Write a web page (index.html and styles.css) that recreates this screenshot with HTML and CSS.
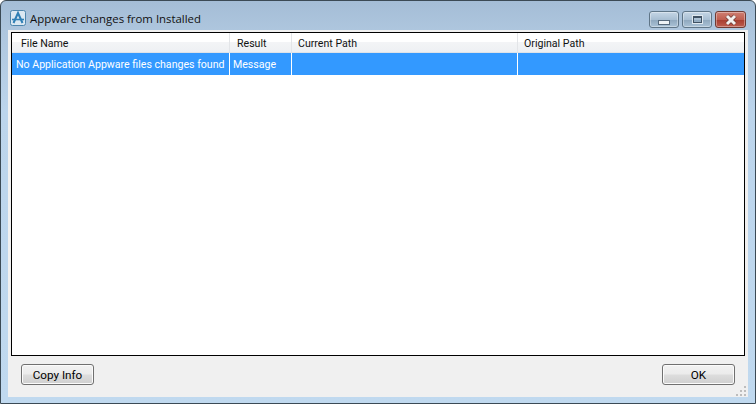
FILE: index.html
```html
<!DOCTYPE html>
<html lang="en">
<head>
<meta charset="utf-8">
<title>Appware changes from Installed</title>
<link rel="stylesheet" href="styles.css">
</head>
<body>
<div class="window">
  <div class="titlebar">
    <svg class="app-icon" width="16" height="16" viewBox="0 0 16 16">
      <rect x="0.5" y="0.5" width="15" height="15" rx="2" fill="#dbe8f2" stroke="#4f86ad"/>
      <path d="M3.5 13 L8 3 L12.5 13" fill="none" stroke="#2f7fb5" stroke-width="2"/>
      <path d="M2 9.5 H14" fill="none" stroke="#2f7fb5" stroke-width="1.6"/>
    </svg>
    <span class="title">Appware changes from Installed</span>
    <div class="controls">
      <div class="ctl"><span class="min-glyph"></span></div>
      <div class="ctl"><span class="max-glyph"></span></div>
      <div class="ctl close"><svg width="16" height="12" viewBox="0 0 16 12"><path d="M4 2 L12 10 M12 2 L4 10" stroke="#6b3a34" stroke-width="4.4" fill="none"/><path d="M4 2 L12 10 M12 2 L4 10" stroke="#f4f1f0" stroke-width="3" fill="none"/></svg></div>
    </div>
  </div>
  <div class="client">
    <div class="list">
      <div class="row header">
        <div class="cell c1 h1">File Name</div>
        <div class="cell c2 h2">Result</div>
        <div class="cell c3 h3">Current Path</div>
        <div class="cell c4 h3">Original Path</div>
      </div>
      <div class="row selected">
        <div class="cell c1">No Application Appware files changes found</div>
        <div class="cell c2">Message</div>
        <div class="cell c3"></div>
        <div class="cell c4"></div>
      </div>
    </div>
    <div class="footer">
      <button class="btn copy">Copy Info</button>
      <button class="btn ok">OK</button>
    </div>
    <svg class="grip" width="11" height="11" viewBox="0 0 11 11"><path d="M8 1h2v2H8zM4 5h2v2H4zM8 5h2v2H8zM0 9h2v2H0zM4 9h2v2H4zM8 9h2v2H8z" fill="#bdbdbd"/></svg>
  </div>
</div>
</body>
</html>
```
FILE: styles.css
```css
html, body { margin: 0; padding: 0; background: #fff; }
body { width: 756px; height: 405px; overflow: hidden; font-family: Roboto, "Liberation Sans", sans-serif; font-size: 10.6px; color: #000; }
.window {
  box-sizing: border-box; width: 756px; height: 404px;
  border: 1px solid #3b4a55; border-radius: 6px 6px 0 0;
  background: linear-gradient(180deg, #a4bdd6 0, #aec6de 30px, #bcd5ec 110px, #c0d9ef 100%);
  padding: 0 7px 6px; display: flex; flex-direction: column;
}
.titlebar { height: 29px; display: flex; align-items: center; flex: none; }
.app-icon { margin: 0 4px 0 2px; flex: none; position: relative; top: 2px; }
.title { font-family: "Open Sans", sans-serif; font-size: 11.4px; color: #111; position: relative; top: 3px; }
.controls { margin-left: auto; display: flex; gap: 3px; margin-right: 2px; align-self: flex-start; margin-top: 10px; }
.ctl {
  box-sizing: border-box; width: 30px; height: 17px; border: 1px solid #5f7587; border-radius: 3px;
  background: linear-gradient(180deg, #c5d6e6 0, #a9bfd3 50%, #8ea7bd 52%, #aac2d6 100%);
  display: flex; align-items: center; justify-content: center; box-shadow: inset 0 0 0 1px rgba(255,255,255,.35);
}
.ctl.close { width: 31px; border-color: #6f3a33; background: linear-gradient(180deg, #cf7f72 0, #bf5e50 50%, #a83c2e 52%, #bc5c4e 100%); }
.min-glyph { display: block; width: 10px; height: 3px; margin-top: 5px; background: #eef2f5; border: 1px solid #56687a; }
.max-glyph { display: block; width: 7px; height: 4px; background: transparent; border: 1px solid #3f5163; border-top-width: 2px; box-shadow: 0 0 0 1px #dfe8ef; }
.client { position: relative; flex: 1; background: #f0f0f0; padding: 2px 3px 0; display: flex; flex-direction: column; min-height: 0; }
.list { flex: none; height: 324px; box-sizing: border-box; border: 1px solid #000; background: #fff; }
.row { display: flex; }
.header { height: 19px; background: linear-gradient(180deg, #fff 0, #fff 45%, #f3f4f6 50%, #eef0f3 100%); border-bottom: 1px solid #dfe3e8; }
.cell { box-sizing: border-box; flex: none; white-space: nowrap; overflow: hidden; }
.header .cell { line-height: 21px; border-right: 1px solid #e3e5e8; color: #111; }
.c1 { width: 218px; } .c2 { width: 62px; } .c3 { width: 226px; } .c4 { flex: 1; border-right: 0 !important; }
.h1 { padding-left: 9px; } .h2 { padding-left: 7px; } .h3 { padding-left: 6px; }
.selected { height: 22px; background: #3399ff; color: #fff; }
.selected .cell { line-height: 23px; padding-left: 3px; border-right: 1px solid #fff; }
.selected .c1 { padding-left: 4px; }
.footer { display: flex; justify-content: space-between; padding: 8px 10px 0; }
.btn {
  box-sizing: border-box; width: 73px; height: 21px; padding: 0; border: 1px solid #707070; border-radius: 3px;
  font: 11.7px Roboto, "Liberation Sans", sans-serif; color: #000;
  background: linear-gradient(180deg, #f2f2f2 0, #ebebeb 48%, #dddddd 52%, #cfcfcf 100%);
  box-shadow: inset 0 0 0 1px #fbfbfb;
}
.grip { position: absolute; right: 1px; bottom: 1px; }
```
